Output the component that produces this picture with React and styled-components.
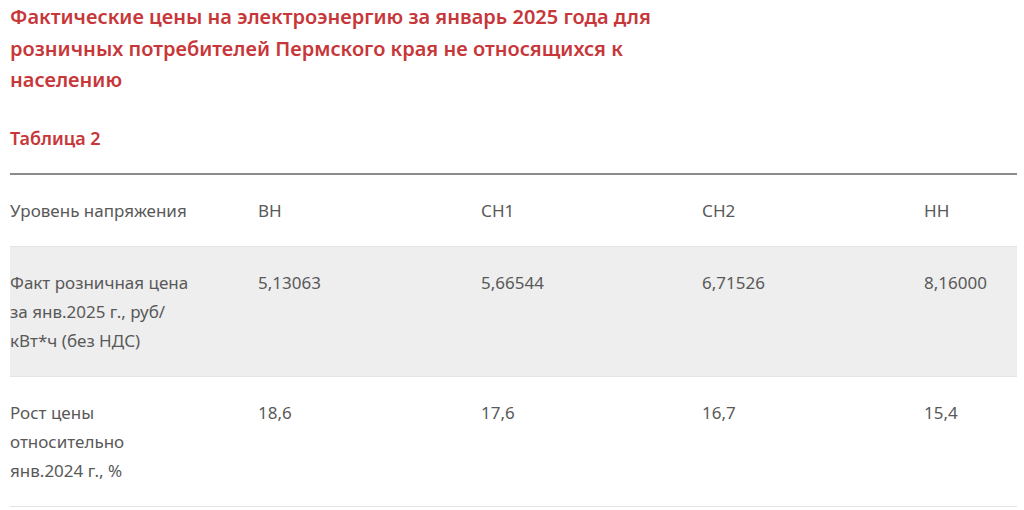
import React from 'react'
import styled, { createGlobalStyle } from 'styled-components'

const GlobalStyle = createGlobalStyle`
  body {
    margin: 0;
    background: #fff;
    font-family: "Noto Sans", "Open Sans", sans-serif;
  }
`

const rows = [
  { label: <>Факт розничная цена за янв.2025 г., руб/<wbr />кВт*ч (без НДС)</>, key: 'price', values: ['5,13063', '5,66544', '6,71526', '8,16000'], shaded: true },
  { label: 'Рост цены относительно янв.2024\u00a0г.,\u00a0%', key: 'growth', values: ['18,6', '17,6', '16,7', '15,4'] },
]

export default function App() {
  return (
    <>
      <GlobalStyle />
      <Page>
        <Title>Фактические цены на электроэнергию за январь 2025 года для розничных потребителей Пермского края не относящихся к населению</Title>
        <Caption>Таблица 2</Caption>
        <Table>
          <Row>
            <Cell>Уровень напряжения</Cell>
            <Cell>ВН</Cell>
            <Cell>СН1</Cell>
            <Cell>СН2</Cell>
            <Cell>НН</Cell>
          </Row>
          {rows.map((r) => (
            <Row key={r.key} $shaded={r.shaded}>
              <Cell>{r.label}</Cell>
              {r.values.map((v, i) => <Cell key={i}>{v}</Cell>)}
            </Row>
          ))}
        </Table>
      </Page>
    </>
  )
}

const Page = styled.div`
  padding: 1px 7px 0 10px;
`

const Title = styled.h2`
  margin: 0;
  width: 660px;
  font-size: 20px;
  line-height: 31.5px;
  font-weight: 600;
  color: #c7373a;
`

const Caption = styled.div`
  margin-top: 28px;
  font-size: 18px;
  line-height: 28px;
  font-weight: 600;
  color: #c7373a;
`

const Table = styled.div`
  margin-top: 21px;
  border-top: 2px solid #8c8c8c;
`

const Row = styled.div`
  display: grid;
  grid-template-columns: 248px 223px 221px 222px 1fr;
  background: ${(p) => (p.$shaded ? '#eeeeee' : 'transparent')};
  border-bottom: 1px solid #e4e4e4;
`

const Cell = styled.div`
  padding: 21px 56px 21px 0;
  font-size: 17px;
  line-height: 29px;
  color: #595959;
`
